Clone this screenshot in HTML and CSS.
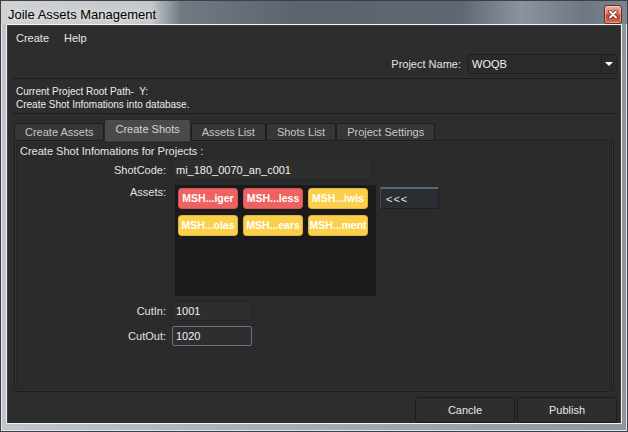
FILE: index.html
```html
<!DOCTYPE html>
<html>
<head>
<meta charset="utf-8">
<title>Joile Assets Management</title>
<link rel="stylesheet" href="styles.css">
</head>
<body>
<div class="window">
  <div class="titlebar">
    <span class="title">Joile Assets Management</span>
    <span class="close-btn">
      <svg width="10" height="9" viewBox="0 0 10 9">
        <path d="M2 1.5 L8 7.5 M8 1.5 L2 7.5" stroke="#6b2418" stroke-width="3.6" stroke-linecap="round" fill="none"/>
        <path d="M2 1.5 L8 7.5 M8 1.5 L2 7.5" stroke="#ffffff" stroke-width="2" stroke-linecap="round" fill="none"/>
      </svg>
    </span>
  </div>
  <div class="frame">
    <div class="client">
      <div class="menubar">
        <span class="menu-item">Create</span>
        <span class="menu-item">Help</span>
      </div>
      <div class="content">
        <div class="project-row">
          <span class="label">Project Name:</span>
          <div class="combo">
            <span class="combo-text">WOQB</span>
            <span class="combo-arrow"><span class="tri"></span></span>
          </div>
        </div>
        <div class="sep"></div>
        <div class="info">
          <div class="info-line">Current Project Root Path-  Y:</div>
          <div class="info-line">Create Shot Infomations into database.</div>
        </div>
        <div class="sep"></div>
        <div class="tabs">
          <span class="tab">Create Assets</span>
          <span class="tab active">Create Shots</span>
          <span class="tab">Assets List</span>
          <span class="tab">Shots List</span>
          <span class="tab">Project Settings</span>
        </div>
        <div class="pane">
          <div class="pane-title">Create Shot Infomations for Projects :</div>
          <div class="form">
            <span class="label row-label">ShotCode:</span>
            <input class="text-input wide" value="mi_180_0070_an_c001">

            <span class="label row-label top">Assets:</span>
            <div class="assets-field">
              <div class="asset-list">
                <span class="chip red">MSH...iger</span>
                <span class="chip red">MSH...less</span>
                <span class="chip yellow">MSH...iwis</span>
                <span class="chip yellow">MSH...olas</span>
                <span class="chip yellow">MSH...ears</span>
                <span class="chip yellow">MSH...ment</span>
              </div>
              <button class="move-btn">&lt;&lt;&lt;</button>
            </div>

            <span class="label row-label">CutIn:</span>
            <input class="text-input short" value="1001">

            <span class="label row-label">CutOut:</span>
            <input class="text-input short focused" value="1020">
          </div>
        </div>
        <div class="buttons">
          <button class="push-btn">Cancle</button>
          <button class="push-btn">Publish</button>
        </div>
      </div>
    </div>
  </div>
</div>
</body>
</html>
```
FILE: styles.css
```css
* { box-sizing: border-box; }
html, body { margin: 0; padding: 0; }
body {
  width: 628px;
  height: 432px;
  overflow: hidden;
  font-family: "Liberation Sans", Arial, sans-serif;
  font-size: 11px;
}
.window {
  width: 628px;
  height: 432px;
  display: flex;
  flex-direction: column;
  border: 1px solid #3b4148;
  box-shadow: inset 0 0 0 1px #e4e7ea;
  background: linear-gradient(to right, #c2c6ca 0%, #a9afb5 40%, #8d96a0 100%);
}
.titlebar {
  height: 23px;
  padding: 3px 5px 0 7px;
  display: flex;
  align-items: center;
  background: linear-gradient(to right, #cfd1d3 0px, #c5c8cb 150px, #717a83 180px, #5b646d 300px, #5f6872 460px, #8a94a0 520px, #6c7782 585px, #7c8690 626px);
}
.title {
  font-size: 13px;
  color: #000;
  text-shadow: 0 0 6px rgba(255,255,255,0.9);
}
.close-btn {
  margin-left: auto;
  width: 18px;
  height: 19px;
  border: 1px solid #6e2c22;
  border-radius: 3px;
  background: linear-gradient(to bottom, #eeb0a0 0%, #dc7a65 45%, #c8472f 55%, #d46a50 100%);
  box-shadow: inset 0 0 0 1px rgba(255,255,255,0.35);
  display: flex;
  align-items: center;
  justify-content: center;
}
.frame {
  flex: 1;
  margin: 0 5px 7px 5px;
  border: 1px solid #f0f2f4;
  display: flex;
}
.client {
  flex: 1;
  display: flex;
  flex-direction: column;
  background: #2d2d2d;
  border: 1px solid #3c3c3c;
  border-bottom: 0;
  color: #e4e4e4;
}
.menubar {
  height: 23px;
  padding-left: 8px;
  display: flex;
  align-items: center;
  gap: 15px;
  color: #e8e8e8;
}
.content {
  flex: 1;
  display: flex;
  flex-direction: column;
  padding: 0 3px 0 4px;
}
.project-row {
  display: flex;
  justify-content: flex-end;
  align-items: center;
  gap: 6px;
  padding: 5px 0 4px;
}
.label { color: #e2e2e2; }
.combo {
  width: 150px;
  height: 20px;
  border: 1px solid #1f1f1f;
  border-radius: 3px;
  background: #2a2a2a;
  display: flex;
  align-items: stretch;
}
.combo-text {
  flex: 1;
  padding-left: 4px;
  line-height: 18px;
  color: #f2f2f2;
}
.combo-arrow {
  width: 15px;
  border-left: 1px solid #1f1f1f;
  display: flex;
  align-items: center;
  justify-content: center;
}
.tri {
  width: 0;
  height: 0;
  border-left: 4px solid transparent;
  border-right: 4px solid transparent;
  border-top: 4px solid #ffffff;
}
.sep {
  height: 1px;
  background: #1c1c1c;
}
.info {
  padding: 6px 0 2px 4px;
  font-size: 10px;
  line-height: 13px;
  color: #ececec;
}
.info-line { white-space: pre; }
.tabs {
  margin-top: 5px;
  height: 21px;
  padding-left: 2px;
  display: flex;
  align-items: flex-end;
  position: relative;
  z-index: 1;
}
.tab {
  height: 17px;
  padding: 0 10px;
  line-height: 16px;
  border: 1px solid #1e1e1e;
  border-bottom: 0;
  border-radius: 3px 3px 0 0;
  background: #363636;
  color: #c6c6c6;
}
.tab.active {
  height: 22px;
  margin-bottom: -1px;
  line-height: 18px;
  background: #4a4a4a;
  border-color: #262626;
  color: #d4d4d4;
}
.pane {
  flex: 1;
  margin: 0 3px 0 2px;
  border: 1px solid #1e1e1e;
  border-radius: 3px;
  background: #2b2b2b;
  box-shadow: inset 0 0 0 1px #333333, inset 0 0 0 2px #252525;
}
.pane-title {
  padding: 3px 0 0 5px;
  line-height: 14px;
  margin-bottom: 1px;
  color: #e6e6e6;
}
.form {
  display: grid;
  grid-template-columns: 151px auto;
  column-gap: 6px;
  row-gap: 5px;
  justify-content: start;
}
.row-label {
  text-align: right;
  align-self: center;
}
.row-label.top {
  align-self: start;
  line-height: 14px;
}
.text-input {
  height: 21px;
  padding: 0 3px;
  border: 1px solid #262626;
  border-radius: 2px;
  background: #2e2e2e;
  color: #f2f2f2;
  font-family: "Liberation Sans", Arial, sans-serif;
  font-size: 11px;
  outline: none;
}
.text-input.wide { width: 200px; }
.text-input.short { width: 80px; height: 20px; }
.text-input.focused { border-color: #5f758c; }
.assets-field {
  display: flex;
  align-items: flex-start;
}
.asset-list {
  margin-left: 3px;
  width: 201px;
  height: 111px;
  padding: 3px;
  background: #1a1a1a;
  display: flex;
  flex-wrap: wrap;
  align-content: flex-start;
  gap: 6px 5px;
}
.chip {
  width: 60px;
  height: 21px;
  border-radius: 4px;
  text-align: center;
  line-height: 21px;
  font-size: 10.5px;
  font-weight: bold;
  color: #ffffff;
  box-shadow: inset 0 0 0 1px rgba(0,0,0,0.12);
}
.chip.red { background: #ef6262; }
.chip.yellow { background: #fccf4a; }
.move-btn {
  margin: 2px 0 0 4px;
  width: 59px;
  height: 22px;
  padding: 0 0 0 5px;
  text-align: left;
  background: #2a2e33;
  border: 1px solid #1b1e22;
  border-top: 2px solid #55687c;
  border-left-color: #3f4c5a;
  border-radius: 1px;
  color: #dfe6ec;
  font-family: "Liberation Sans", Arial, sans-serif;
  font-size: 11px;
  letter-spacing: 1px;
}
.buttons {
  margin-top: 5px;
  display: flex;
  justify-content: flex-end;
  gap: 2px;
}
.push-btn {
  width: 100px;
  height: 26px;
  border: 1px solid #1c1c1c;
  border-radius: 3px;
  background: #2e2e2e;
  color: #e8e8e8;
  font-family: "Liberation Sans", Arial, sans-serif;
  font-size: 11px;
}
```
